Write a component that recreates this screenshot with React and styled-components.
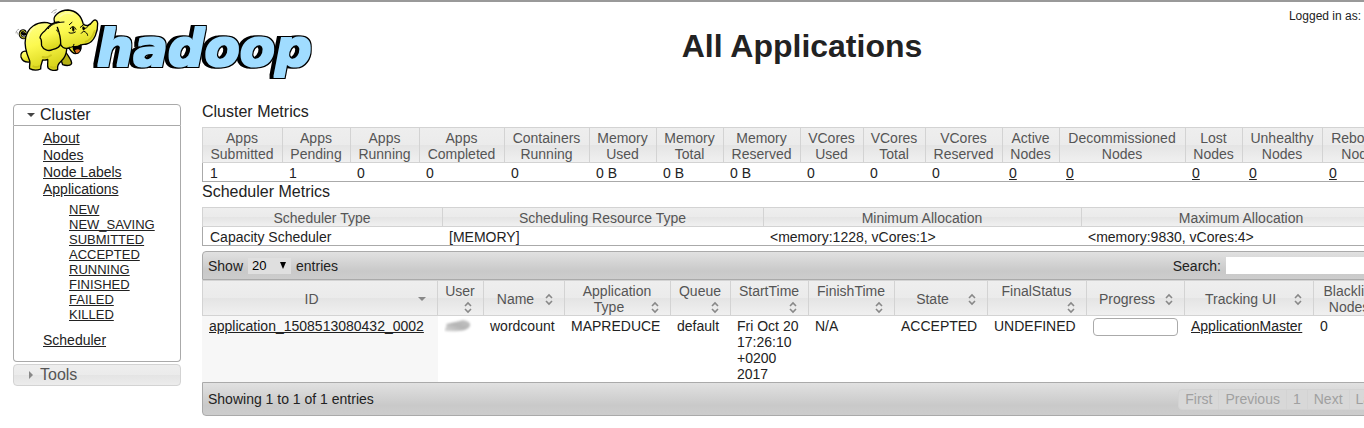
import React from 'react'
import styled, { createGlobalStyle } from 'styled-components'

const clusterMetrics = [
  { name: 'Apps Submitted', value: '1', width: 81 },
  { name: 'Apps Pending', value: '1', width: 68 },
  { name: 'Apps Running', value: '0', width: 69 },
  { name: 'Apps Completed', value: '0', width: 85 },
  { name: 'Containers Running', value: '0', width: 85 },
  { name: 'Memory Used', value: '0 B', width: 67 },
  { name: 'Memory Total', value: '0 B', width: 67 },
  { name: 'Memory Reserved', value: '0 B', width: 77 },
  { name: 'VCores Used', value: '0', width: 63 },
  { name: 'VCores Total', value: '0', width: 62 },
  { name: 'VCores Reserved', value: '0', width: 77 },
  { name: 'Active Nodes', value: '0', width: 57, link: true },
  { name: 'Decommissioned Nodes', value: '0', width: 126, link: true },
  { name: 'Lost Nodes', value: '0', width: 57, link: true },
  { name: 'Unhealthy Nodes', value: '0', width: 80, link: true },
  { name: 'Rebooted Nodes', value: '0', width: 79, link: true },
]

const schedulerMetrics = [
  { name: 'Scheduler Type', value: 'Capacity Scheduler', width: 241 },
  { name: 'Scheduling Resource Type', value: '[MEMORY]', width: 321 },
  { name: 'Minimum Allocation', value: '<memory:1228, vCores:1>', width: 318 },
  { name: 'Maximum Allocation', value: '<memory:9830, vCores:4>', width: 320 },
]

const appColumns = [
  { name: 'ID', width: 236, sorted: true },
  { name: 'User', width: 46 },
  { name: 'Name', width: 81 },
  { name: 'Application Type', width: 106 },
  { name: 'Queue', width: 60 },
  { name: 'StartTime', width: 78 },
  { name: 'FinishTime', width: 86 },
  { name: 'State', width: 93 },
  { name: 'FinalStatus', width: 99 },
  { name: 'Progress', width: 98 },
  { name: 'Tracking UI', width: 129 },
  { name: 'Blacklisted Nodes', width: 88 },
]

const appStates = ['NEW', 'NEW_SAVING', 'SUBMITTED', 'ACCEPTED', 'RUNNING', 'FINISHED', 'FAILED', 'KILLED']

function Logo() {
  return (
    <svg width="304" height="78" viewBox="36 15 912 234" role="img" aria-label="hadoop">
      <defs>
        <linearGradient id="skin" x1="0" y1="0" x2="0.3" y2="1">
          <stop offset="0" stopColor="#ffff8a" />
          <stop offset="0.5" stopColor="#fcf94f" />
          <stop offset="1" stopColor="#d9d51c" />
        </linearGradient>
        {/* square, heavy letters with a black outline that is deeper on the left */}
        <filter id="block" x="-5%" y="-10%" width="110%" height="120%" colorInterpolationFilters="sRGB">
          <feMorphology in="SourceGraphic" operator="dilate" radius="3" result="face" />
          <feMorphology in="SourceAlpha" operator="dilate" radius="7" result="edge" />
          <feOffset in="edge" dx="-9" dy="0" result="side" />
          <feMerge>
            <feMergeNode in="side" />
            <feMergeNode in="edge" />
            <feMergeNode in="face" />
          </feMerge>
        </filter>
      </defs>
      <text
        x="290"
        y="198"
        fontFamily="'DejaVu Sans', sans-serif"
        fontWeight="bold"
        fontStyle="oblique"
        fontSize="154"
        fill="#a0dcff"
        filter="url(#block)"
      >
        hadoop
      </text>
      <g stroke="#000" strokeWidth="4" strokeLinejoin="round" strokeLinecap="round" fill="url(#skin)">
        <path d="M78 112 C66 118 58 108 61 98 C64 90 75 90 76 98 C76 104 69 105 68 100" fill="none" strokeWidth="8" />
        <path d="M78 112 C66 118 58 108 61 98 C64 90 75 90 76 98" fill="none" stroke="#e8e33a" strokeWidth="3" />
        <path d="M196 150 C199 166 214 174 215 189 C214 198 199 198 188 194 L180 170 Z" fill="#b5b014" />
        <path d="M80 154 C68 151 60 160 63 171 C67 183 78 187 88 186 L96 166 Z" />
        <path d="M142 68 C108 64 84 84 77 112 C72 136 80 162 89 182 C91 192 87 199 89 206 C99 211 113 211 122 207 C121 198 125 189 128 180 C134 181 139 180 143 178 C145 190 140 197 145 205 C152 212 165 213 173 209 C170 197 176 190 184 183 C194 174 199 160 200 149 L188 84 Z" />
        <path d="M163 64 C157 47 179 31 204 30 C229 32 244 48 250 73 C258 79 269 78 278 64 C284 57 292 60 293 70 C294 92 284 127 260 132 C253 134 248 132 243 135 C244 148 239 159 227 161 C216 160 211 151 207 144 C193 148 183 141 181 130 Z" />
        <path d="M219 139 C226 142 235 139 242 135 C244 149 239 159 228 160 C222 154 219 148 219 139 Z" fill="#000" />
        <path d="M225 151 C230 147 237 147 240 151 C237 158 230 160 228 158 Z" fill="#d96a1e" stroke="none" />
        <path d="M177 66 C161 65 145 79 135 92 C126 99 120 107 120 114 C127 118 123 128 125 137 C130 149 145 155 157 149 C169 146 181 139 182 130 C182 113 176 98 168 91 C178 83 184 75 192 73" stroke="none" />
        <path d="M177 66 C161 65 145 79 135 92 C126 99 120 107 120 114 C127 118 123 128 125 137 C130 149 145 155 157 149 C169 146 181 139 182 130 C182 113 178 98 172 82" fill="none" />
        <path d="M145 86 C151 76 164 67 192 66" fill="none" strokeWidth="3" />
        <path d="M211 86 C214 78 223 76 228 88" fill="none" strokeWidth="3" />
        <path d="M218 82 C222 80 224 87 221 94 C217 94 216 87 218 82 Z" fill="#000" strokeWidth="2" />
        <path d="M207 98 C211 101 220 100 226 96 M208 74 L216 67 M241 82 L252 73 M250 86 C258 86 263 82 266 76 M244 100 L250 94 M252 94 C258 96 263 101 263 106 M208 142 C216 144 222 138 222 133" fill="none" strokeWidth="3" />
        <path d="M248 81 C254 78 255 84 253 90 C249 92 246 87 248 81 Z" fill="#000" strokeWidth="1" />
      </g>
      <g fill="none" stroke="#fffdb0" strokeWidth="5" strokeLinecap="round" opacity="0.8">
        <path d="M102 82 C90 91 85 102 84 115" />
        <path d="M180 49 C190 39 205 37 216 42" />
      </g>
      <g fill="none" stroke="#c4bd17" strokeWidth="6" strokeLinecap="round" opacity="0.7">
        <path d="M100 199 C107 202 112 201 117 199 M153 201 C158 204 163 203 167 201" />
        <path d="M128 171 C136 174 147 171 153 166 M284 93 C278 110 271 121 257 125" />
      </g>
      <g fill="none" stroke="#777" strokeWidth="2" strokeLinecap="round">
        <path d="M48 99 C48 94 51 90 56 88 M54 103 L53 98 M155 38 C158 33 163 30 169 29 M162 40 L168 36" />
      </g>
    </svg>
  )
}

function SortIcon({ sorted }) {
  return (
    <SortBox>
      <svg width="16" height="16" viewBox="0 0 16 16" aria-hidden="true">
        {sorted ? (
          <path d="M4 6h8l-4 4z" fill="#888" />
        ) : (
          <path d="M5 7l3-3 3 3M5 10l3 3 3-3" fill="none" stroke="#888" strokeWidth="1.6" />
        )}
      </svg>
    </SortBox>
  )
}

function Smudge() {
  return (
    <svg width="32" height="16" viewBox="0 0 32 16" role="img" aria-label="user">
      <defs>
        <filter id="soft" x="-20%" y="-40%" width="140%" height="180%">
          <feGaussianBlur stdDeviation="1" />
        </filter>
        <linearGradient id="smear" x1="0" y1="1" x2="1" y2="0">
          <stop offset="0" stopColor="#d8d8d8" />
          <stop offset="0.5" stopColor="#b4b4b4" />
          <stop offset="1" stopColor="#c4c4c4" />
        </linearGradient>
      </defs>
      <path d="M2 6 C8 5 15 3 19 2 C23 3 27 4 26 8 C24 13 12 14 1 13 C0 11 4 8 2 6 Z" fill="url(#smear)" filter="url(#soft)" />
    </svg>
  )
}

function MetricsTable({ columns }) {
  return (
    <Table>
      <colgroup>
        {columns.map((c) => <Col key={c.name} $w={c.width} />)}
      </colgroup>
      <thead>
        <tr>
          {columns.map((c) => <Th key={c.name} scope="col">{c.name}</Th>)}
        </tr>
      </thead>
      <tbody>
        <tr>
          {columns.map((c) => (
            <MetricTd key={c.name}>{c.link ? <Link href="#nodes">{c.value}</Link> : c.value}</MetricTd>
          ))}
        </tr>
      </tbody>
    </Table>
  )
}

function Sidebar() {
  return (
    <Nav>
      <NavButton type="button" $open aria-expanded="true">
        <svg width="16" height="16" viewBox="0 0 16 16" aria-hidden="true"><path d="M4 6h8l-4 4z" fill="#454545" /></svg>
        Cluster
      </NavButton>
      <NavPanel>
        <NavList>
          <li><Link href="#about">About</Link></li>
          <li><Link href="#nodes">Nodes</Link></li>
          <li><Link href="#labels">Node Labels</Link></li>
          <li>
            <Link href="#apps">Applications</Link>
            <SubList>
              {appStates.map((s) => (
                <li key={s}><Link href={'#' + s}>{s}</Link></li>
              ))}
            </SubList>
          </li>
          <li><Link href="#scheduler">Scheduler</Link></li>
        </NavList>
      </NavPanel>
      <NavButton type="button" aria-expanded="false">
        <svg width="16" height="16" viewBox="0 0 16 16" aria-hidden="true"><path d="M6 4v8l4-4z" fill="#888" /></svg>
        Tools
      </NavButton>
    </Nav>
  )
}

function Applications() {
  return (
    <AppsWrapper>
      <Toolbar $top>
        <Length>
          <label htmlFor="length">Show</label>
          <SelectBox>
            <select id="length" defaultValue="20">
              <option>20</option>
              <option>50</option>
              <option>100</option>
            </select>
            <svg width="6" height="7" viewBox="0 0 6 7" aria-hidden="true"><path d="M0 0h6l-3 7z" fill="#000" /></svg>
          </SelectBox>
          <span>entries</span>
        </Length>
        <Search>
          <label htmlFor="search">Search:</label>
          <input id="search" type="text" />
        </Search>
      </Toolbar>
      <Table>
        <colgroup>
          {appColumns.map((c) => <Col key={c.name} $w={c.width} />)}
        </colgroup>
        <thead>
          <tr>
            {appColumns.map((c) => (
              <Th key={c.name} scope="col">{c.name}<SortIcon sorted={c.sorted} /></Th>
            ))}
          </tr>
        </thead>
        <tbody>
          <tr>
            <Td $sorted><Link href="#app">application_1508513080432_0002</Link></Td>
            <Td><Smudge /></Td>
            <Td>wordcount</Td>
            <Td>MAPREDUCE</Td>
            <Td>default</Td>
            <Td>Fri Oct 20 17:26:10 +0200 2017</Td>
            <Td>N/A</Td>
            <Td>ACCEPTED</Td>
            <Td>UNDEFINED</Td>
            <Td><Progress role="progressbar" aria-label="Progress" aria-valuenow="0" /></Td>
            <Td><Link href="#master">ApplicationMaster</Link></Td>
            <Td>0</Td>
          </tr>
        </tbody>
      </Table>
      <Toolbar>
        <span>Showing 1 to 1 of 1 entries</span>
        <Pager>
          {['First', 'Previous', '1', 'Next', 'Last'].map((p) => (
            <button key={p} type="button" disabled>{p}</button>
          ))}
        </Pager>
      </Toolbar>
    </AppsWrapper>
  )
}

export default function App() {
  return (
    <Page>
      <GlobalStyle />
      <Header>
        <LogoLink href="#home"><Logo /></LogoLink>
        <h1>All Applications</h1>
        <User>Logged in as:</User>
      </Header>
      <Body>
        <Sidebar />
        <Main>
          <h3>Cluster Metrics</h3>
          <MetricsTable columns={clusterMetrics} />
          <h3>Scheduler Metrics</h3>
          <MetricsTable columns={schedulerMetrics} />
          <Applications />
        </Main>
      </Body>
    </Page>
  )
}

const GlobalStyle = createGlobalStyle`
  *{
    box-sizing:border-box;
  }
  body{
    margin:0;
    background:white;
    color:#222;
    font-family:"Liberation Sans", Arial, sans-serif;
    font-size:14px;
    line-height:16px;
    overflow-x:hidden;
  }
  button,input,select{
    font-family:inherit;
    color:inherit;
  }
`;

// the tables need more room than a small window has, the rest is cut off at the right
const Page = styled.div`
  min-width:1402px;
  border-top:2px solid #999;
`;

const Header = styled.header`
  display:grid;
  grid-template-columns:202px 1fr;
  height:100px;
  h1{
    grid-area:1 / 2;
    margin:26px 0 0;
    text-align:center;
    font-size:32px;
    line-height:36px;
  }
`;

const LogoLink = styled.a`
  grid-area:1 / 1;
  padding:3px 0 0 12px;
  svg{
    display:block;
  }
`;

const User = styled.div`
  grid-area:1 / 2;
  justify-self:end;
  padding:6px 41px 0 0;
  font-size:12px;
`;

const Body = styled.div`
  display:flex;
  gap:21px;
  padding-left:13px;
`;

const Nav = styled.nav`
  flex:none;
  width:168px;
  padding-top:2px;
`;

const NavButton = styled.button`
  display:flex;
  align-items:center;
  gap:1px;
  width:100%;
  height:22px;
  padding:0 9px;
  border:1px solid ${(p) => (p.$open ? '#aaa' : '#d3d3d3')};
  border-radius:${(p) => (p.$open ? '4px 4px 0 0' : '4px')};
  background:${(p) => (p.$open ? 'white' : 'linear-gradient(#eee, #ebebeb 50%, #e4e4e4 50%, #ececec)')};
  color:${(p) => (p.$open ? '#222' : '#555')};
  font-size:16px;
`;

const NavPanel = styled.div`
  margin-bottom:2px;
  padding:4px 0 12px 29px;
  border:1px solid #aaa;
  border-top:none;
  border-radius:0 0 4px 4px;
`;

const NavList = styled.ul`
  margin:0;
  padding:0;
  list-style:none;
  line-height:17px;
`;

const SubList = styled.ul`
  margin:4px 0 10px;
  padding:0 0 0 26px;
  list-style:none;
  font-size:13px;
  line-height:15px;
`;

const Link = styled.a`
  color:#222;
`;

const Main = styled.main`
  flex:1;
  h3{
    margin:0 0 5px;
    font-size:16px;
    font-weight:400;
    line-height:20px;
  }
`;

const Table = styled.table`
  width:100%;
  table-layout:fixed;
  border-collapse:separate;
  border-spacing:0;
`;

const Col = styled.col`
  width:${(p) => p.$w}px;
`;

const Th = styled.th`
  padding:2px 7px 0 6px;
  border:1px solid #d3d3d3;
  border-left-width:0;
  background:linear-gradient(#eee, #ebebeb 50%, #e4e4e4 50%, #f0f0f0);
  color:#555;
  font-weight:400;
  &:first-child{
    border-left-width:1px;
  }
`;

const Td = styled.td`
  padding:2px 7px 0 6px;
  vertical-align:top;
  background:${(p) => (p.$sorted ? '#f7f7f7' : 'white')};
  &:first-child{
    padding-left:7px;
  }
  svg{
    display:block;
  }
`;

const MetricTd = styled.td`
  padding:2px 7px 0 6px;
  border-bottom:1px solid #aaa;
  &:first-child{
    padding-left:7px;
    border-left:1px solid #aaa;
  }
`;

const SortBox = styled.span`
  float:right;
  width:16px;
  height:16px;
  svg{
    display:block;
  }
`;

const AppsWrapper = styled.div`
  margin-top:5px;
`;

const Toolbar = styled.div`
  display:flex;
  align-items:center;
  justify-content:space-between;
  height:${(p) => (p.$top ? '29px' : '34px')};
  padding:0 5px;
  border:1px solid #aaa;
  border-radius:${(p) => (p.$top ? '4px 4px 0 0' : '0 0 4px 4px')};
  background:linear-gradient(#e1e1e1, #c9c9c9 70%, #cdcdcd);
`;

const Length = styled.div`
  display:flex;
  align-items:center;
  gap:5px;
`;

const SelectBox = styled.span`
  position:relative;
  select{
    display:block;
    appearance:none;
    width:43px;
    height:16px;
    padding:0 4px;
    border:none;
    border-radius:0;
    background:#dfdfdf;
    color:#000;
    font-size:13px;
  }
  svg{
    position:absolute;
    top:4px;
    right:5px;
    pointer-events:none;
  }
`;

const Search = styled.div`
  display:flex;
  align-items:center;
  gap:5px;
  input{
    width:170px;
    height:17px;
    padding:0 2px;
    border:none;
    background:white;
  }
`;

const Progress = styled.div`
  height:18px;
  border:1px solid #aaa;
  border-radius:4px;
  background:white;
`;

const Pager = styled.div`
  display:flex;
  padding-right:7px;
  button{
    height:21px;
    padding:0 6px;
    border:1px solid #d3d3d3;
    border-left-width:0;
    background:#d8d8d8;
    color:#a0a0a0;
    font-size:14px;
  }
  button:first-child{
    border-left-width:1px;
    border-radius:4px 0 0 4px;
  }
  button:last-child{
    border-radius:0 4px 4px 0;
  }
`;
